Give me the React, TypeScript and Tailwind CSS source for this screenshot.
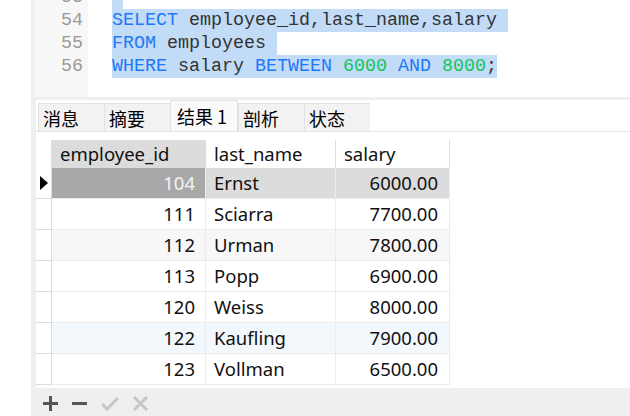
import { Fragment } from "react";

const mono = { fontFamily: '"Liberation Mono", "DejaVu Sans Mono", monospace' };
const ui = { fontFamily: '"Noto Sans", "Noto Sans CJK SC", sans-serif' };
const cjk = { fontFamily: '"Noto Sans CJK SC", "Noto Sans", sans-serif' };

type Tok = { t: string; c?: "kw" | "num" };

const lines: { n: number; toks: Tok[] }[] = [
  { n: 53, toks: [{ t: " " }] },
  {
    n: 54,
    toks: [{ t: "SELECT", c: "kw" }, { t: " employee_id,last_name,salary " }],
  },
  { n: 55, toks: [{ t: "FROM", c: "kw" }, { t: " employees " }] },
  {
    n: 56,
    toks: [
      { t: "WHERE", c: "kw" },
      { t: " salary " },
      { t: "BETWEEN", c: "kw" },
      { t: " " },
      { t: "6000", c: "num" },
      { t: " " },
      { t: "AND", c: "kw" },
      { t: " " },
      { t: "8000", c: "num" },
      { t: ";" },
    ],
  },
];

const tabs = ["消息", "摘要", "结果 1", "剖析", "状态"];

const rows = [
  { id: 104, name: "Ernst", salary: "6000.00" },
  { id: 111, name: "Sciarra", salary: "7700.00" },
  { id: 112, name: "Urman", salary: "7800.00" },
  { id: 113, name: "Popp", salary: "6900.00" },
  { id: 120, name: "Weiss", salary: "8000.00" },
  { id: 122, name: "Kaufling", salary: "7900.00" },
  { id: 123, name: "Vollman", salary: "6500.00" },
];

function Editor() {
  return (
    <div className="flex h-[97px] overflow-hidden bg-white" style={mono}>
      <div className="w-[53px] shrink-0 bg-[#f7f7f7]">
        <div className="-mt-[14px] flex flex-col">
          {lines.map((l) => (
            <div key={l.n} className="h-[23px] pr-[5px] text-right text-[18.33px] leading-[23px] text-[#999999]">
              {l.n}
            </div>
          ))}
        </div>
      </div>
      <div className="flex-1 pl-[24px]">
        <div className="-mt-[14px] flex flex-col">
          {lines.map((l) => (
            <div key={l.n} className="h-[23px] whitespace-pre text-[18.33px] leading-[23px]">
              <span className="inline-block h-[23px] bg-[#c2dbf7]">
                {l.toks.map((tk, i) => (
                  <span
                    key={i}
                    className={
                      tk.c === "kw" ? "text-[#1f78f5]" : tk.c === "num" ? "text-[#14c45c]" : "text-[#333333]"
                    }
                  >
                    {tk.t}
                  </span>
                ))}
              </span>
            </div>
          ))}
        </div>
      </div>
    </div>
  );
}

function Tabs() {
  return (
    <div className="flex h-[32px] items-end border-b border-[#e4e4e4] pl-[2px]" style={cjk}>
      {tabs.map((t) => {
        const active = t === "结果 1";
        return (
          <div
            key={t}
            className={
              active
                ? "flex h-[31px] w-[68px] items-center border-x border-t border-[#e2e2e2] bg-[#f9f9f9] pl-[6px] text-[18px] leading-none text-black"
                : "flex h-[28px] w-[66px] items-center border-l border-t border-[#e2e2e2] bg-[#f2f2f2] pl-[4px] text-[18px] leading-none text-black"
            }
          >
            {t}
          </div>
        );
      })}
    </div>
  );
}

function Grid() {
  const cell = "flex h-[31px] items-center border-b border-r border-[#ebebeb] text-[18.5px] text-[#111111]";
  const head = "flex h-[28px] items-center border-r border-[#dcdcdc] pl-[8px] text-[18.5px] text-[#111111]";
  return (
    <div className="flex-1 pt-[8px]" style={ui}>
      <div className="grid grid-cols-[16px_154px_130px_114px]">
        <div className="h-[28px] border-r border-[#dcdcdc]" />
        <div className={`${head} bg-[#dcdcdc]`}>employee_id</div>
        <div className={head}>last_name</div>
        <div className={head}>salary</div>
        {rows.map((r, i) => {
          const bg =
            i === 0 ? "bg-[#dcdcdc]" : i === 2 ? "bg-[#f7f7f7]" : i === 5 ? "bg-[#f3f8fc]" : "bg-white";
          return (
            <Fragment key={r.id}>
              <div className="flex h-[31px] items-center border-b border-r border-[#dcdcdc] pl-[3px]">
                {i === 0 && (
                  <svg width="9" height="14" viewBox="0 0 9 14">
                    <path d="M1 0 L9 7 L1 14 Z" fill="#000" />
                  </svg>
                )}
              </div>
              <div
                className={`${cell} justify-end pr-[10px] ${
                  i === 0 ? "bg-[#a8a8a8] !text-[#f4f4f4]" : bg
                }`}
              >
                {r.id}
              </div>
              <div className={`${cell} pl-[8px] ${bg}`}>{r.name}</div>
              <div className={`${cell} justify-end pr-[11px] ${bg}`}>{r.salary}</div>
            </Fragment>
          );
        })}
      </div>
    </div>
  );
}

function Toolbar() {
  return (
    <div className="flex h-[28px] items-center gap-[14px] pl-[12px] pt-[2px]">
      <svg width="15" height="15" viewBox="0 0 15 15">
        <path d="M7.5 0v15M0 7.5h15" stroke="#555" strokeWidth="3" />
      </svg>
      <svg width="15" height="15" viewBox="0 0 15 15">
        <path d="M0 7.5h15" stroke="#555" strokeWidth="3" />
      </svg>
      <svg width="18" height="15" viewBox="0 0 18 15">
        <path d="M1 8l5 5L17 2" stroke="#c6c6c6" strokeWidth="3" fill="none" />
      </svg>
      <svg width="15" height="15" viewBox="0 0 15 15">
        <path d="M1 1l13 13M14 1L1 14" stroke="#c6c6c6" strokeWidth="3" />
      </svg>
    </div>
  );
}

export default function App() {
  return (
    <div className="flex h-[416px] w-[630px] overflow-hidden bg-white">
      <div className="w-[31px] shrink-0 bg-white" />
      <div className="flex flex-1 flex-col bg-[#efefef]">
        <div className="pl-[4px]">
          <Editor />
        </div>
        <div className="mt-[3px] ml-[5px] flex h-[288px] flex-col bg-white">
          <Tabs />
          <Grid />
        </div>
        <Toolbar />
      </div>
    </div>
  );
}
